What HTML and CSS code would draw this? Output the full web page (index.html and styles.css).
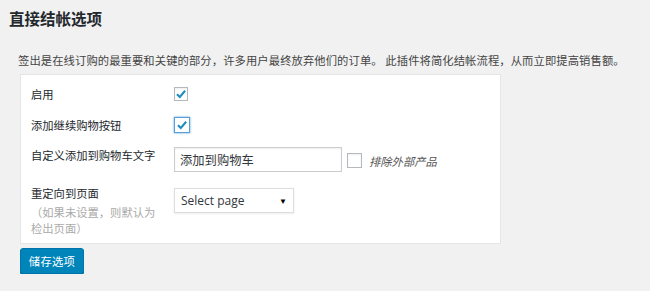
FILE: index.html
```html
<!DOCTYPE html>
<html lang="zh-CN">
    <head>
        <meta charset="UTF-8">
        <title>直接结帐选项</title>
        <link rel="stylesheet" href="styles.css">
    </head>
    <body>
        <div class="page">
            <h2 class="title">直接结帐选项</h2>
            <p class="intro">签出是在线订购的最重要和关键的部分，许多用户最终放弃他们的订单。 此插件将简化结帐流程，从而立即提高销售额。</p>

            <div class="card">
                <div class="row row1">
                    <div class="label">启用</div>
                    <span class="check">
                        <svg viewBox="0 0 14 14" width="12" height="12"><path d="M2.3 7.2 L5.6 10.4 L11.8 3.2" fill="none" stroke="#1e8cbe" stroke-width="2.4"/></svg>
                    </span>
                </div>

                <div class="row row2">
                    <div class="label">添加继续购物按钮</div>
                    <span class="check focus">
                        <svg viewBox="0 0 14 14" width="12" height="12"><path d="M2.3 7.2 L5.6 10.4 L11.8 3.2" fill="none" stroke="#1e8cbe" stroke-width="2.4"/></svg>
                    </span>
                </div>

                <div class="row row3">
                    <div class="label">自定义添加到购物车文字</div>
                    <div class="field">添加到购物车</div>
                    <span class="check empty"></span>
                    <span class="hint">排除外部产品</span>
                </div>

                <div class="row row4">
                    <div class="label">
                        重定向到页面
                        <div class="note">（如果未设置，则默认为检出页面）</div>
                    </div>
                    <div class="select">
                        <span>Select page</span>
                        <span class="arrow">▼</span>
                    </div>
                </div>
            </div>

            <button class="save">储存选项</button>
        </div>
    </body>
</html>
```

FILE: styles.css
```css
*{
    box-sizing: border-box;
}
body {
    margin: 0;
    background-color: #f1f1f1;
    font-family: "Noto Sans CJK SC", "Noto Sans", sans-serif;
    font-size: 11.3px;
    color: #23282d;
    overflow: hidden;
}
.page{
    padding: 0 0 0 20px;
}
.title{
    margin: 8px 0 0 -11px;
    font-size: 15.5px;
    line-height: 20px;
    font-weight: bold;
    color: #23282d;
}
.intro{
    margin: 24px 0 0 -2px;
    line-height: 16px;
    color: #444;
    letter-spacing: 0.1px;
    white-space: nowrap;
}
.card{
    margin-top: 6px;
    width: 481px;
    background-color: white;
    border: 1px solid #e5e5e5;
    padding: 5px 10px 7px 10px;
}
.row{
    display: flex;
    align-items: center;
}
.row1{
    height: 28px;
}
.row2{
    height: 34px;
}
.row3{
    align-items: flex-start;
    padding: 5px 0 8px 0;
}
.row4{
    align-items: flex-start;
    padding-top: 8px;
}
.label{
    width: 143px;
    flex: none;
    padding-right: 10px;
    line-height: 16px;
    color: #23282d;
}
.row4 .label{
    margin-top: -3px;
}
.note{
    margin-top: 3px;
    color: #aaa;
}
.check{
    width: 14px;
    height: 14px;
    border: 1px solid #b4b9be;
    background-color: white;
    display: flex;
    align-items: center;
    justify-content: center;
    box-shadow: inset 0 1px 2px rgba(0, 0, 0, 0.07);
}
.check.focus{
    width: 16px;
    height: 16px;
    border-color: #5b9dd9;
    box-shadow: 0 0 2px rgba(30, 140, 190, 0.8);
}
.row3 .check{
    margin: 6px 0 0 5px;
    width: 15px;
    height: 15px;
}
.field{
    width: 168px;
    height: 25px;
    border: 1px solid #ccc;
    box-shadow: inset 0 1px 2px rgba(0, 0, 0, 0.07);
    padding: 0 5px;
    font-size: 12.3px;
    line-height: 24px;
    color: #32373c;
}
.hint{
    margin: 6px 0 0 7px;
    line-height: 16px;
    font-style: italic;
    color: #555;
}
.select{
    width: 120px;
    height: 25px;
    border: 1px solid #ddd;
    box-shadow: 0 1px 2px rgba(0, 0, 0, 0.07);
    display: flex;
    align-items: center;
    justify-content: space-between;
    padding: 0 6px 0 6px;
    font-family: "Open Sans", "Noto Sans", sans-serif;
    font-size: 12px;
    color: #32373c;
}
.arrow{
    font-size: 8px;
    color: black;
}
.save{
    margin-top: 4px;
    width: 64px;
    height: 26px;
    padding: 0;
    background-color: #0085ba;
    border: 1px solid #0073aa;
    border-radius: 3px;
    box-shadow: 0 1px 0 #006799;
    color: white;
    font-family: "Noto Sans CJK SC", sans-serif;
    font-size: 11.3px;
    letter-spacing: 0.3px;
}
```
